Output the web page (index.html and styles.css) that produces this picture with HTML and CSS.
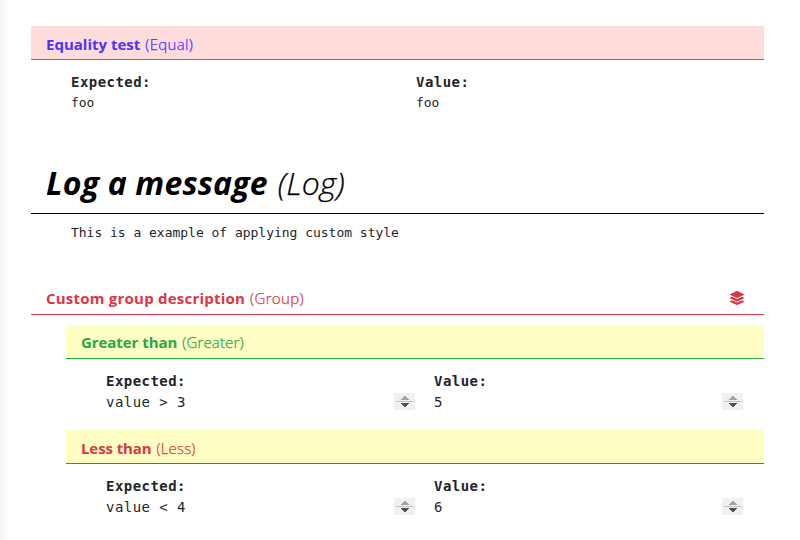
FILE: index.html
```html
<!DOCTYPE html>
<html lang="en">
<head>
<meta charset="utf-8">
<title>Test results</title>
<link rel="stylesheet" href="styles.css">
</head>
<body>
<main class="page">
  <section class="test equal">
    <header class="head"><b>Equality test</b><span>(Equal)</span></header>
    <div class="cols">
      <div class="col"><strong>Expected:</strong><pre>foo</pre></div>
      <div class="col"><strong>Value:</strong><pre>foo</pre></div>
    </div>
  </section>
  <section class="test log">
    <header class="head"><b>Log a message</b><span>(Log)</span></header>
    <pre class="message">This is a example of applying custom style</pre>
  </section>
  <section class="test group">
    <header class="head"><b>Custom group description</b><span>(Group)</span>
      <svg class="layers" viewBox="0 0 512 512"><path d="M12.4 148l232.900 105.700c6.800 3.100 14.500 3.100 21.300 0l232.900-105.700c16.600-7.500 16.600-32.500 0-40L266.600 2.300a25.600 25.600 0 0 0-21.300 0L12.400 108c-16.600 7.500-16.600 32.500 0 40zm487.200 88.300l-58.100-26.300-161.600 73.300c-15.200 6.900-32.600 6.900-47.800 0L70.500 210l-58.100 26.300c-16.600 7.500-16.600 32.500 0 40l232.900 105.600c6.800 3.100 14.500 3.100 21.300 0l233-105.600c16.600-7.500 16.600-32.500 0-40zm0 127.800l-57.900-26.200-161.800 73.300c-15.200 6.900-32.600 6.900-47.800 0L70.300 337.900l-57.900 26.200c-16.600 7.500-16.600 32.500 0 40l232.900 105.600c6.800 3.100 14.500 3.100 21.300 0l233-105.600c16.600-7.500 16.600-32.500 0-40z"/></svg>
    </header>
    <div class="children">
      <section class="test greater">
        <header class="head"><b>Greater than</b><span>(Greater)</span></header>
        <div class="cols">
          <div class="col"><strong>Expected:</strong><div class="field">value &gt; 3<svg class="spin" viewBox="0 0 21 17"><path class="up" d="M7 7v-1h1v-1h1v-1h1v-1h2v1h1v1h1v1h1v1z"/><path class="rule" d="M2 8h17v1H2z"/><path class="down" d="M7 10h8v1h-1v1h-1v1h-1v1h-2v-1H9v-1H8v-1H7z"/></svg></div></div>
          <div class="col"><strong>Value:</strong><div class="field">5<svg class="spin" viewBox="0 0 21 17"><path class="up" d="M7 7v-1h1v-1h1v-1h1v-1h2v1h1v1h1v1h1v1z"/><path class="rule" d="M2 8h17v1H2z"/><path class="down" d="M7 10h8v1h-1v1h-1v1h-1v1h-2v-1H9v-1H8v-1H7z"/></svg></div></div>
        </div>
      </section>
      <section class="test less">
        <header class="head"><b>Less than</b><span>(Less)</span></header>
        <div class="cols">
          <div class="col"><strong>Expected:</strong><div class="field">value &lt; 4<svg class="spin" viewBox="0 0 21 17"><path class="up" d="M7 7v-1h1v-1h1v-1h1v-1h2v1h1v1h1v1h1v1z"/><path class="rule" d="M2 8h17v1H2z"/><path class="down" d="M7 10h8v1h-1v1h-1v1h-1v1h-2v-1H9v-1H8v-1H7z"/></svg></div></div>
          <div class="col"><strong>Value:</strong><div class="field">6<svg class="spin" viewBox="0 0 21 17"><path class="up" d="M7 7v-1h1v-1h1v-1h1v-1h2v1h1v1h1v1h1v1z"/><path class="rule" d="M2 8h17v1H2z"/><path class="down" d="M7 10h8v1h-1v1h-1v1h-1v1h-2v-1H9v-1H8v-1H7z"/></svg></div></div>
        </div>
      </section>
    </div>
  </section>
</main>
</body>
</html>
```

FILE: styles.css
```css
* { box-sizing: border-box; }
body {
  margin: 0;
  height: 540px;
  overflow: hidden;
  background: #fff;
  color: #212529;
  font-family: "Open Sans", "Noto Sans", sans-serif;
}
.page {
  height: 540px;
  padding: 26px 36px 0 31px;
  background: linear-gradient(90deg, #f2f2f2, #fafafa 4px, #fff 9px);
}
.head {
  display: flex;
  align-items: center;
  height: 34px;
  padding: 3px 20px 0 15px;
  border-bottom: 1px solid currentColor;
  font-size: 15px;
  line-height: 30px;
  white-space: pre;
}
.head b { font-weight: 700; margin-right: 5px; }
.head span { font-weight: 300; -webkit-text-stroke: .25px currentColor; }
.cols { display: flex; padding: 12px 0 0 40px; }
.col { flex: 1; }
.col strong, .field, pre {
  display: block;
  margin: 0;
  font-family: "DejaVu Sans Mono", monospace;
  font-size: 14px;
  letter-spacing: .45px;
  line-height: 21px;
}
pre { font-size: 13px; letter-spacing: -.02px; }
.col pre { line-height: 19px; }
.equal { height: 128px; }
.equal .head { background: #ffdcdc; border-color: #28a745; color: #4b32ff; }
.equal span { letter-spacing: .35px; }
.equal .col { flex: 0 0 345px; }
.log { height: 128px; }
.log .head {
  height: 60px;
  padding-top: 0;
  padding-bottom: 1px;
  color: #000;
  font-size: 32px;
  font-style: italic;
}
.log .head b { margin-right: 10px; letter-spacing: .18px; }
.message { padding: 8px 0 0 40px; }
.group > .head { height: 33px; padding-top: 0; color: #dc3545; }
.group > .head b { letter-spacing: .22px; }
.group > .head span { letter-spacing: .35px; }
.layers { width: 14px; height: 14px; margin-left: auto; fill: currentColor; }
.children { padding: 10px 0 0 35px; }
.children .test { height: 105px; }
.children .head { background: #ffffc3; }
.children .head span { letter-spacing: .15px; }
.greater .head { padding-top: 1px; color: #28a745; }
.greater b { letter-spacing: -.06px; }
.less .head { color: #dc3545; }
.less b { letter-spacing: -.1px; }
.children .col { flex: 0 0 328px; }
.field { display: flex; align-items: center; justify-content: space-between; padding-right: 19px; }
.spin { width: 21px; height: 17px; margin-top: -2px; background: #f0f0f0; shape-rendering: crispEdges; }
.up { fill: #a3a3a3; }
.rule { fill: #c0c0c0; }
.down { fill: #505050; }
```
